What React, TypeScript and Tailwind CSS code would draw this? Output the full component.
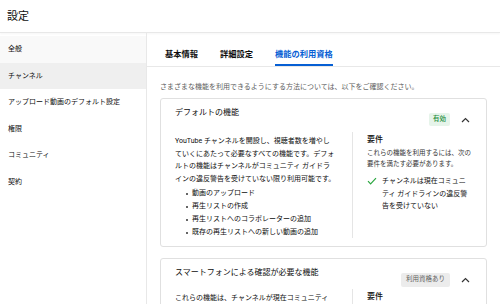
import React from 'react';

const navItems = ['全般', 'チャンネル', 'アップロード動画のデフォルト設定', '権限', 'コミュニティ', '契約'];

const Chevron = () => (
  <svg width="9" height="6" viewBox="0 0 9 6" className="shrink-0">
    <path d="M1 5 L4.5 1.5 L8 5" fill="none" stroke="#333" strokeWidth="1.2" />
  </svg>
);

const Check = () => (
  <svg width="10" height="8" viewBox="0 0 10 8" className="shrink-0 mt-[2px]">
    <path d="M1 4.2 L3.6 6.8 L9 1.2" fill="none" stroke="#2ba640" strokeWidth="1.2" />
  </svg>
);

const Badge = ({ label, variant }: { label: string; variant: 'green' | 'gray' }) => (
  <span
    className={
      variant === 'green'
        ? 'h-[13px] px-[4px] flex items-center rounded-[2px] bg-[#e6f4ea] text-[#1e8e3e] text-[6.5px] font-medium'
        : 'h-[14px] px-[5px] flex items-center rounded-[2px] bg-[#ececec] text-[#606060] text-[6.5px]'
    }
  >
    {label}
  </span>
);

const CardHeader = ({ title, badge }: { title: string; badge: React.ReactNode }) => (
  <div className="flex items-start justify-between pl-[14px] pr-[16px]">
    <h3 className="text-[8px] leading-[12px] mt-[8px]">{title}</h3>
    <div className="flex items-center gap-[11px] mt-[14px]">
      {badge}
      <Chevron />
    </div>
  </div>
);

export default function App() {
  return (
    <div className="w-[500px] h-[304px] overflow-hidden bg-white text-[#0d0d0d] font-['Roboto','Noto_Sans_CJK_JP',sans-serif]">
      <header className="h-[33px] flex items-center pl-[7px] border-b border-[#e8e8e8] shadow-[0_1px_2px_rgba(0,0,0,0.04)]">
        <h1 className="text-[11px] leading-none">設定</h1>
      </header>
      <div className="flex h-[271px]">
        <nav className="w-[147px] shrink-0 border-r border-[#e8e8e8] pt-[3px]">
          {navItems.map((item, i) => (
            <div
              key={item}
              className={`h-[26.5px] flex items-center pl-[8px] text-[7px] ${i === 0 ? 'bg-[#f9f9f9]' : ''} ${i === 1 ? 'bg-[#efefef]' : ''}`}
            >
              {item}
            </div>
          ))}
        </nav>
        <main className="flex-1 min-w-0">
          <div className="h-[34px] border-b border-[#e8e8e8] flex gap-[22px] pl-[18px]">
            {['基本情報', '詳細設定', '機能の利用資格'].map((tab, i) => (
              <div
                key={tab}
                className={`relative flex items-center pt-[9px] text-[8.25px] font-bold ${i === 2 ? 'text-[#065fd4]' : 'text-[#0d0d0d]'}`}
              >
                {tab}
                {i === 2 && <span className="absolute left-0 right-0 bottom-0 h-[2px] bg-[#065fd4]" />}
              </div>
            ))}
          </div>
          <div className="px-[13px]">
            <p className="mt-[15px] text-[7px] leading-[10px] text-[#606060] whitespace-nowrap">
              さまざまな機能を利用できるようにする方法については、以下をご確認ください。
            </p>
            <section className="mt-[6px] w-[327px] h-[149px] border border-[#e0e0e0] rounded-[3px]">
              <CardHeader title="デフォルトの機能" badge={<Badge label="有効" variant="green" />} />
              <div className="flex mt-[6px]">
                <div className="w-[191px] pl-[14px] pr-[8px] pt-[3px] text-[7px] text-[#0d0d0d]">
                  <p className="leading-[12.5px] whitespace-nowrap">
                    YouTube チャンネルを開設し、視聴者数を増やし
                    <br />
                    ていくにあたって必要なすべての機能です。デフォ
                    <br />
                    ルトの機能はチャンネルがコミュニティ ガイドラ
                    <br />
                    インの違反警告を受けていない限り利用可能です。
                  </p>
                  <ul className="mt-[2px] pl-[11px] leading-[13px] whitespace-nowrap">
                    {['動画のアップロード', '再生リストの作成', '再生リストへのコラボレーターの追加', '既存の再生リストへの新しい動画の追加'].map((li) => (
                      <li key={li} className="flex items-center gap-[4px]">
                        <span className="w-[2px] h-[2px] rounded-full bg-[#333]" />
                        {li}
                      </li>
                    ))}
                  </ul>
                </div>
                <div className="w-px h-[106px] bg-[#e5e5e5]" />
                <div className="pl-[14px] pr-[8px] pt-[2px]">
                  <h4 className="text-[8px] leading-[12px] font-medium">要件</h4>
                  <p className="mt-[2px] text-[6.5px] leading-[10.5px] text-[#333] whitespace-nowrap">
                    これらの機能を利用するには、次の
                    <br />
                    要件を満たす必要があります。
                  </p>
                  <div className="mt-[6px] flex gap-[5px] text-[7px] leading-[12.5px] whitespace-nowrap">
                    <Check />
                    <p>
                      チャンネルは現在コミュニ
                      <br />
                      ティ ガイドラインの違反警
                      <br />
                      告を受けていない
                    </p>
                  </div>
                </div>
              </div>
            </section>
            <section className="mt-[11px] w-[327px] h-[80px] border border-[#e0e0e0] rounded-[3px]">
              <CardHeader title="スマートフォンによる確認が必要な機能" badge={<Badge label="利用資格あり" variant="gray" />} />
              <div className="flex mt-[2px]">
                <div className="w-[191px] pl-[14px] pr-[8px] pt-[3px] text-[7px] leading-[12.5px] whitespace-nowrap">
                  これらの機能は、チャンネルが現在コミュニティ
                </div>
                <div className="w-px h-[40px] bg-[#e5e5e5]" />
                <div className="pl-[14px] pt-[2px]">
                  <h4 className="text-[8px] leading-[12px] font-medium">要件</h4>
                </div>
              </div>
            </section>
          </div>
        </main>
      </div>
    </div>
  );
}
